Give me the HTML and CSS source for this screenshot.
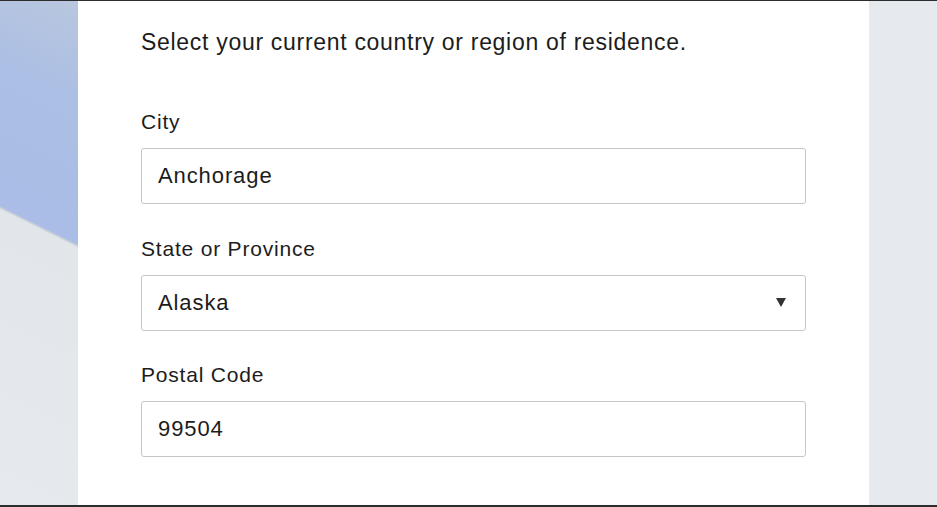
FILE: index.html
```html
<!DOCTYPE html>
<html lang="en">

<head>
    <meta charset="UTF-8">
    <meta name="viewport" content="width=device-width, initial-scale=1.0">
    <title>Residence</title>
    <link rel="stylesheet" href="styles.css">
</head>

<body>

    <div class="screen">
        <div class="side side-left"></div>

        <form class="residence-form">
            <p class="intro">Select your current country or region of residence.</p>

            <div class="form-group">
                <label for="city">City</label>
                <input type="text" id="city" value="Anchorage">
            </div>

            <div class="form-group">
                <label for="state">State or Province</label>
                <div class="select-wrap">
                    <select id="state">
                        <option>Alaska</option>
                        <option>Alabama</option>
                        <option>Arizona</option>
                    </select>
                </div>
            </div>

            <div class="form-group">
                <label for="postal-code">Postal Code</label>
                <input type="text" id="postal-code" value="99504">
            </div>
        </form>

        <div class="side side-right"></div>
    </div>

</body>

</html>
```

FILE: styles.css
```css
/* Basic styling */
* {
    box-sizing: border-box;
}

body {
    margin: 0;
    font-family: "Liberation Sans", Arial, sans-serif;
    color: #1c1c1c;
}

.screen {
    display: flex;
    height: 507px;
    border-top: 1px solid #2c2c2c;
    border-bottom: 2px solid #2c2c2c;
}

/* Backdrop on both sides of the form */
.side-left {
    width: 78px;
    background: linear-gradient(26.3deg,
            #e6eaef 0,
            #e2e6eb 265px,
            #c3cad6 267px,
            #a9bde6 268.5px,
            #acbfe4 400px,
            #b9c7de 100%);
}

.side-right {
    flex: 1;
    background-color: #e6e9ed;
}

.residence-form {
    width: 791px;
    padding: 27px 63px 0;
    background-color: white;
}

.intro {
    margin: 0 0 53px;
    font-size: 23px;
    line-height: 28px;
    letter-spacing: 0.7px;
}

.form-group {
    margin-bottom: 31.5px;
}

.form-group label {
    display: block;
    margin-bottom: 14px;
    font-size: 21px;
    line-height: 25px;
    letter-spacing: 0.8px;
}

.form-group input,
.form-group select {
    display: block;
    width: 100%;
    height: 56px;
    padding: 0 16px;
    border: 1px solid #c6c6c6;
    border-radius: 3px;
    background-color: white;
    font-family: inherit;
    font-size: 22px;
    letter-spacing: 0.9px;
    color: #1c1c1c;
    outline: none;
}

.form-group select {
    appearance: none;
    -webkit-appearance: none;
}

.select-wrap {
    position: relative;
}

.select-wrap::after {
    content: "";
    position: absolute;
    right: 20px;
    top: 23px;
    border-left: 5.5px solid transparent;
    border-right: 5.5px solid transparent;
    border-top: 9px solid #333;
    pointer-events: none;
}
```
